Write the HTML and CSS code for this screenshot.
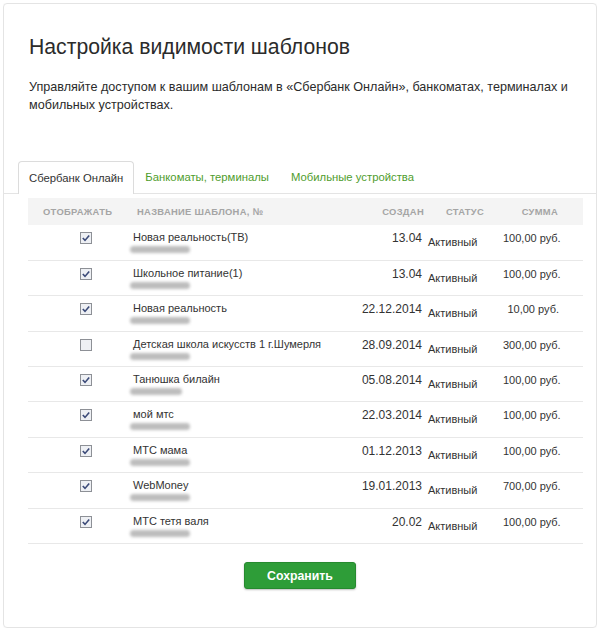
FILE: index.html
```html
<!DOCTYPE html>
<html lang="ru">
<head>
  <meta charset="UTF-8">
  <meta name="viewport" content="width=device-width, initial-scale=1.0">
  <title>Настройка видимости шаблонов</title>
  <link rel="stylesheet" href="styles.css">
</head>
<body>
  <div class="card">
    <div class="intro">
      <h1 class="title">Настройка видимости шаблонов</h1>
      <p class="lead">Управляйте доступом к вашим шаблонам в «Сбербанк Онлайн», банкоматах, терминалах и мобильных устройствах.</p>
    </div>

    <ul class="tabs">
      <li class="tab active">Сбербанк Онлайн</li>
      <li class="tab">Банкоматы, терминалы</li>
      <li class="tab">Мобильные устройства</li>
    </ul>

    <div class="content">
      <table class="templates">
        <colgroup>
          <col class="w-show">
          <col class="w-name">
          <col class="w-date">
          <col class="w-status">
          <col class="w-sum">
        </colgroup>
        <thead>
          <tr>
            <th class="col-show">Отображать</th>
            <th class="col-name">Название шаблона, №</th>
            <th class="col-date">Создан</th>
            <th class="col-status">Статус</th>
            <th class="col-sum">Сумма</th>
          </tr>
        </thead>
        <tbody>
          <tr>
            <td class="col-show"><svg class="cb" width="12" height="12" viewBox="0 0 12 12"><rect x="0.5" y="0.5" width="11" height="11" fill="#eef0f4" stroke="#8d9096"/><path d="M2.8 6l2.2 2.4 4.2-5" fill="none" stroke="#3b4a78" stroke-width="1.6"/></svg></td>
            <td class="col-name">Новая реальность(ТВ)<span class="mask"></span></td>
            <td class="col-date">13.04</td>
            <td class="col-status">Активный</td>
            <td class="col-sum">100,00 руб.</td>
          </tr>
          <tr>
            <td class="col-show"><svg class="cb" width="12" height="12" viewBox="0 0 12 12"><rect x="0.5" y="0.5" width="11" height="11" fill="#eef0f4" stroke="#8d9096"/><path d="M2.8 6l2.2 2.4 4.2-5" fill="none" stroke="#3b4a78" stroke-width="1.6"/></svg></td>
            <td class="col-name">Школьное питание(1)<span class="mask"></span></td>
            <td class="col-date">13.04</td>
            <td class="col-status">Активный</td>
            <td class="col-sum">100,00 руб.</td>
          </tr>
          <tr>
            <td class="col-show"><svg class="cb" width="12" height="12" viewBox="0 0 12 12"><rect x="0.5" y="0.5" width="11" height="11" fill="#eef0f4" stroke="#8d9096"/><path d="M2.8 6l2.2 2.4 4.2-5" fill="none" stroke="#3b4a78" stroke-width="1.6"/></svg></td>
            <td class="col-name">Новая реальность<span class="mask"></span></td>
            <td class="col-date">22.12.2014</td>
            <td class="col-status">Активный</td>
            <td class="col-sum">10,00 руб.</td>
          </tr>
          <tr>
            <td class="col-show"><svg class="cb" width="12" height="12" viewBox="0 0 12 12"><rect x="0.5" y="0.5" width="11" height="11" fill="#eef0f4" stroke="#8d9096"/></svg></td>
            <td class="col-name">Детская школа искусств 1 г.Шумерля<span class="mask"></span></td>
            <td class="col-date">28.09.2014</td>
            <td class="col-status">Активный</td>
            <td class="col-sum">300,00 руб.</td>
          </tr>
          <tr>
            <td class="col-show"><svg class="cb" width="12" height="12" viewBox="0 0 12 12"><rect x="0.5" y="0.5" width="11" height="11" fill="#eef0f4" stroke="#8d9096"/><path d="M2.8 6l2.2 2.4 4.2-5" fill="none" stroke="#3b4a78" stroke-width="1.6"/></svg></td>
            <td class="col-name">Танюшка билайн<span class="mask short"></span></td>
            <td class="col-date">05.08.2014</td>
            <td class="col-status">Активный</td>
            <td class="col-sum">100,00 руб.</td>
          </tr>
          <tr>
            <td class="col-show"><svg class="cb" width="12" height="12" viewBox="0 0 12 12"><rect x="0.5" y="0.5" width="11" height="11" fill="#eef0f4" stroke="#8d9096"/><path d="M2.8 6l2.2 2.4 4.2-5" fill="none" stroke="#3b4a78" stroke-width="1.6"/></svg></td>
            <td class="col-name">мой мтс<span class="mask"></span></td>
            <td class="col-date">22.03.2014</td>
            <td class="col-status">Активный</td>
            <td class="col-sum">100,00 руб.</td>
          </tr>
          <tr>
            <td class="col-show"><svg class="cb" width="12" height="12" viewBox="0 0 12 12"><rect x="0.5" y="0.5" width="11" height="11" fill="#eef0f4" stroke="#8d9096"/><path d="M2.8 6l2.2 2.4 4.2-5" fill="none" stroke="#3b4a78" stroke-width="1.6"/></svg></td>
            <td class="col-name">МТС мама<span class="mask"></span></td>
            <td class="col-date">01.12.2013</td>
            <td class="col-status">Активный</td>
            <td class="col-sum">100,00 руб.</td>
          </tr>
          <tr>
            <td class="col-show"><svg class="cb" width="12" height="12" viewBox="0 0 12 12"><rect x="0.5" y="0.5" width="11" height="11" fill="#eef0f4" stroke="#8d9096"/><path d="M2.8 6l2.2 2.4 4.2-5" fill="none" stroke="#3b4a78" stroke-width="1.6"/></svg></td>
            <td class="col-name">WebMoney<span class="mask"></span></td>
            <td class="col-date">19.01.2013</td>
            <td class="col-status">Активный</td>
            <td class="col-sum">700,00 руб.</td>
          </tr>
          <tr>
            <td class="col-show"><svg class="cb" width="12" height="12" viewBox="0 0 12 12"><rect x="0.5" y="0.5" width="11" height="11" fill="#eef0f4" stroke="#8d9096"/><path d="M2.8 6l2.2 2.4 4.2-5" fill="none" stroke="#3b4a78" stroke-width="1.6"/></svg></td>
            <td class="col-name">МТС тетя валя<span class="mask"></span></td>
            <td class="col-date">20.02</td>
            <td class="col-status">Активный</td>
            <td class="col-sum">100,00 руб.</td>
          </tr>
        </tbody>
      </table>
    </div>

    <div class="actions">
      <button class="save">Сохранить</button>
    </div>
  </div>
</body>
</html>
```

FILE: styles.css
```css
body {
  margin: 3px;
  font-family: Arial, "Liberation Sans", sans-serif;
  color: #333;
  background: #fff;
}

.card {
  box-sizing: border-box;
  height: 625px;
  border: 1px solid #e4e4e4;
  border-radius: 4px;
  box-shadow: 0 0 2px rgba(0, 0, 0, 0.06);
  overflow: hidden;
}

.intro {
  padding: 30px 18px 0 25px;
}

.title {
  margin: 0;
  font-size: 21.2px;
  line-height: 26px;
  font-weight: normal;
  color: #2b2b2b;
}

.lead {
  margin: 18px 0 0;
  font-size: 12.6px;
  line-height: 18px;
  color: #2b2b2b;
}

.tabs {
  display: flex;
  margin: 47px 0 0;
  padding: 0 0 0 14px;
  list-style: none;
  border-bottom: 1px solid #e4e4e4;
}

.tab {
  padding: 0 11px;
  height: 32px;
  line-height: 33px;
  font-size: 11.3px;
  color: #4f9d2d;
  cursor: pointer;
}

.tab.active {
  padding: 0 10px;
  color: #333;
  background: #fff;
  border: 1px solid #dcdcdc;
  border-bottom: none;
  border-radius: 4px 4px 0 0;
  margin-bottom: -1px;
}

.content {
  padding: 4px 12px 0 24px;
}

.templates {
  width: 555px;
  table-layout: fixed;
  border-collapse: collapse;
}

.w-show { width: 100px; }
.w-name { width: 202px; }
.w-date { width: 97px; }
.w-status { width: 76px; }
.w-sum { width: 80px; }

.templates thead tr {
  height: 27px;
}

.templates th {
  padding: 0;
  background: #f4f4f4;
  font-size: 9.4px;
  font-weight: bold;
  letter-spacing: 0.3px;
  text-transform: uppercase;
  color: #a5a5a5;
  white-space: nowrap;
}

.templates tbody tr {
  height: 35.4px;
}

.templates td {
  padding: 0;
  vertical-align: top;
  font-size: 11px;
  line-height: 14px;
  border-bottom: 1px solid #e8e8e8;
}

th.col-show { text-align: left; padding-left: 15px; }
th.col-name { text-align: left; padding-left: 9px; }
th.col-date { text-align: right; padding-right: 3px; }
th.col-status { text-align: center; }
th.col-sum { text-align: right; padding-right: 25px; }

td.col-show { padding: 7px 0 0 52px; }
td.col-name { padding: 5px 0 0 5px; white-space: nowrap; }
td.col-date { padding: 6px 5px 0 0; text-align: right; font-size: 12px; }
td.col-status { padding: 10px 0 0 1px; }
td.col-sum { padding: 6px 24px 0 0; text-align: right; white-space: nowrap; }

.cb {
  display: block;
}

.mask {
  display: block;
  width: 60px;
  height: 7px;
  margin: 2px 0 0 -3px;
  background: #bdbdbd;
  border-radius: 4px;
  filter: blur(1.6px);
}

.mask.short {
  width: 52px;
}

.actions {
  display: flex;
  justify-content: center;
  padding-top: 18px;
}

.save {
  width: 112px;
  height: 27px;
  padding: 0;
  font-family: inherit;
  font-size: 12.3px;
  font-weight: bold;
  color: #fff;
  background: #2e9d38;
  border: 1px solid #268a2f;
  border-radius: 3px;
  box-shadow: 0 1px 2px rgba(0, 0, 0, 0.25);
  cursor: pointer;
}
```
